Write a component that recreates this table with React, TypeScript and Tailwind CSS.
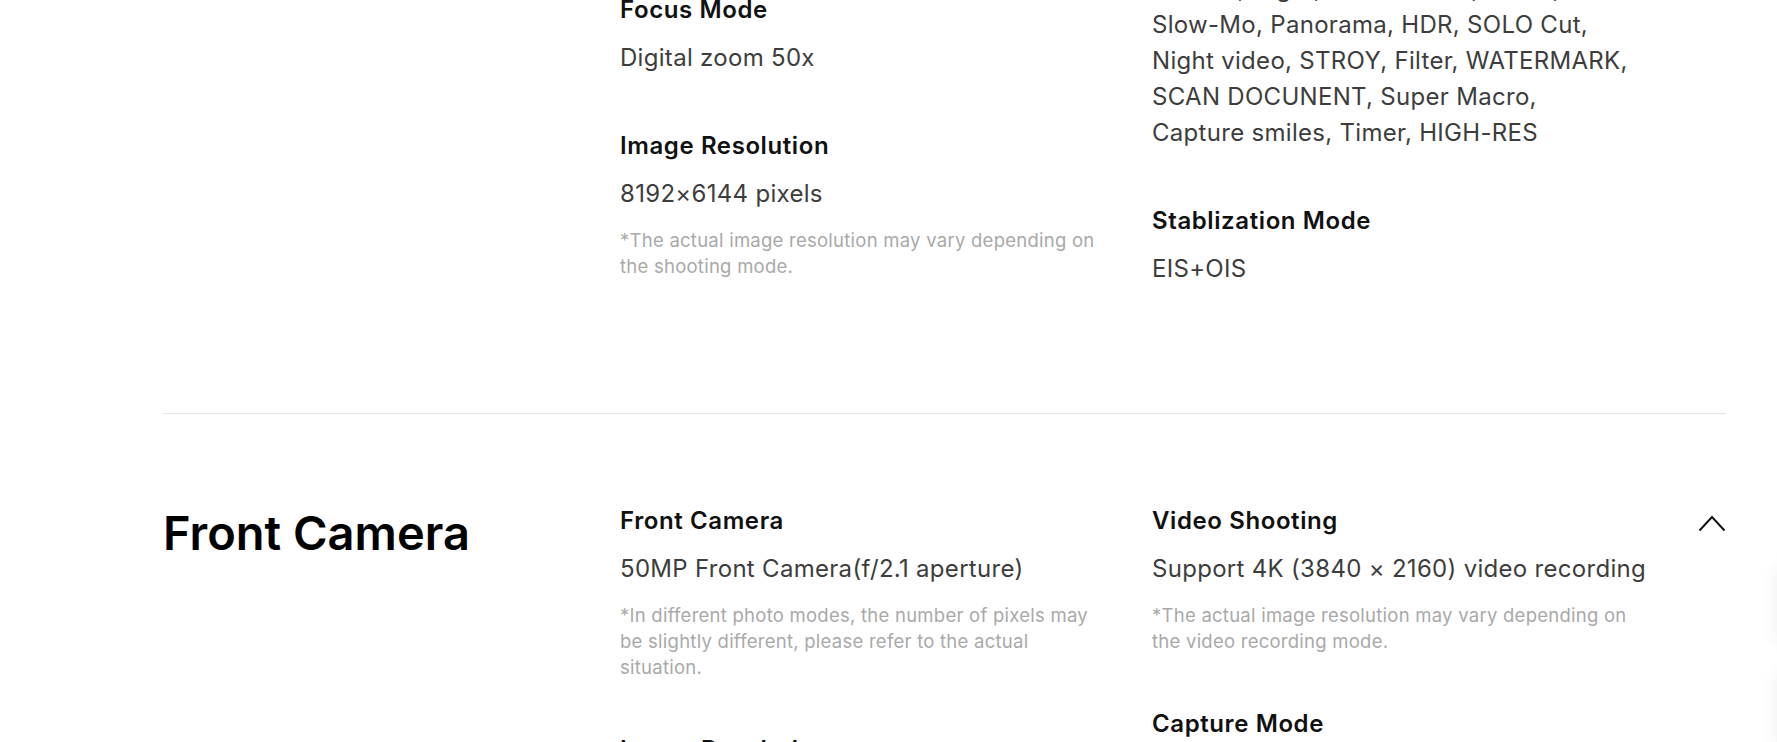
import React from 'react'

type Spec = {
  title: string
  value?: string
  lines?: string[]
  note?: string
}

const font = { fontFamily: 'Inter, "Noto Sans", Arial, sans-serif' }

function ChevronUp() {
  return (
    <svg className="mt-[9px] h-[17px] w-[28px] shrink-0" viewBox="0 0 28 17" fill="none">
      <path d="M1.5 15.5 L14 2 L26.5 15.5" stroke="#111" strokeWidth={2} strokeLinejoin="miter" />
    </svg>
  )
}

function SpecItem({ spec }: { spec: Spec }) {
  return (
    <div>
      <h4 className="text-[24px] font-semibold leading-[30px] tracking-[0.6px] text-[#111]">{spec.title}</h4>
      {spec.value && (
        <p className="mt-[15px] max-w-[540px] text-[24px] leading-[36px] tracking-[0.3px] text-[#3d3d3d]">
          {spec.value}
        </p>
      )}
      {spec.lines && (
        <p className="mt-[15px] text-[24px] leading-[36px] tracking-[0.3px] text-[#3d3d3d]">
          {spec.lines.map((l) => (
            <span key={l} className="block whitespace-nowrap">
              {l}
            </span>
          ))}
        </p>
      )}
      {spec.note && (
        <p className="mt-[15px] max-w-[486px] text-[18.5px] leading-[26px] tracking-[0.25px] text-[#a9a9a9]">
          {spec.note}
        </p>
      )}
    </div>
  )
}

function Column({ items, className = '' }: { items: Spec[]; className?: string }) {
  return (
    <div className={`flex flex-col gap-[55px] ${className}`}>
      {items.map((s) => (
        <SpecItem key={s.title} spec={s} />
      ))}
    </div>
  )
}

const rearMiddle: Spec[] = [
  { title: 'Focus Mode', value: 'Digital zoom 50x' },
  {
    title: 'Image Resolution',
    value: '8192×6144 pixels',
    note: '*The actual image resolution may vary depending on the shooting mode.',
  },
]

const rearRight: Spec[] = [
  {
    title: 'Capture Mode',
    lines: [
      'Photo, Video, Pro, Documents, Night,',
      'Portrait, Night, Professional, Video,',
      'Slow-Mo, Panorama, HDR, SOLO Cut,',
      'Night video, STROY, Filter, WATERMARK,',
      'SCAN DOCUNENT, Super Macro,',
      'Capture smiles, Timer, HIGH-RES',
    ],
  },
  { title: 'Stablization Mode', value: 'EIS+OIS' },
]

const frontMiddle: Spec[] = [
  {
    title: 'Front Camera',
    value: '50MP Front Camera(f/2.1 aperture)',
    note: '*In different photo modes, the number of pixels may be slightly different, please refer to the actual situation.',
  },
  { title: 'Image Resolution', value: '8192×6144 pixels' },
]

const frontRight: Spec[] = [
  {
    title: 'Video Shooting',
    value: 'Support 4K (3840 × 2160) video recording',
    note: '*The actual image resolution may vary depending on the video recording mode.',
  },
  { title: 'Capture Mode', value: 'Photo, Portrait, Night, Video' },
]

export default function App() {
  return (
    <div className="relative h-[742px] w-full overflow-hidden bg-white" style={font}>
      <div className="-mt-[202px] ml-[163px] w-[1563px]">
        <section className="grid grid-cols-[457px_532px_1fr] pt-[92px] pb-[126px]">
          <h2 className="text-[47px] font-semibold leading-[54px] text-black">Rear Camera</h2>
          <Column items={rearMiddle} className="mt-[105px]" />
          <Column items={rearRight} />
        </section>
        <div className="h-px bg-[#e6e6e6]" />
        <section className="grid grid-cols-[457px_532px_1fr] pt-[92px] pb-[120px]">
          <h2 className="text-[47px] font-semibold leading-[54px] text-black">Front Camera</h2>
          <Column items={frontMiddle} />
          <div className="flex items-start justify-between">
            <Column items={frontRight} />
            <ChevronUp />
          </div>
        </section>
      </div>

      {/* floating side buttons, mostly off screen */}
      <div className="absolute left-[1777px] top-[567px] h-[76px] w-[60px] rounded-l-lg bg-white shadow-[0_0_18px_rgba(0,0,0,0.07)]" />
      <div className="absolute left-[1777px] top-[673px] h-[76px] w-[60px] rounded-l-lg bg-white shadow-[0_0_18px_rgba(0,0,0,0.07)]" />
    </div>
  )
}
